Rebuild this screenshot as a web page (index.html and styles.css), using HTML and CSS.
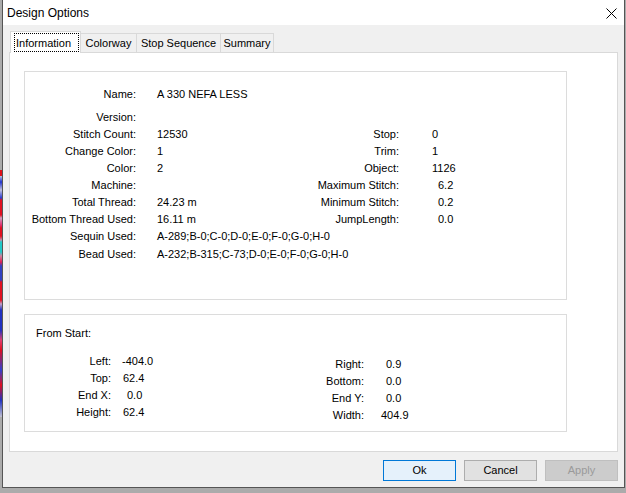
FILE: index.html
```html
<!DOCTYPE html>
<html>
<head>
<meta charset="utf-8">
<title>Design Options</title>
<link rel="stylesheet" href="styles.css">
</head>
<body>
<div class="bgstrip"></div>
<div class="window">
  <div class="titlebar">
    <span class="title">Design Options</span>
    <svg class="close" width="11" height="11" viewBox="0 0 11 11"><path d="M0.5 0.5L10.5 10.5M10.5 0.5L0.5 10.5" stroke="#000" stroke-width="1" fill="none"/></svg>
  </div>
  <div class="client">
    <div class="tabs">
      <div class="tab active t-info"><span class="focus">Information</span></div>
      <div class="tab t-color">Colorway</div>
      <div class="tab t-stop">Stop Sequence</div>
      <div class="tab t-sum">Summary</div>
    </div>
    <div class="page">
      <div class="group g1">
        <div class="info-grid">
          <div class="lbl">Name:</div><div class="val">A 330 NEFA LESS</div><div></div><div></div>
          <div class="lbl">Version:</div><div class="val"></div><div></div><div></div>
          <div class="lbl">Stitch Count:</div><div class="val">12530</div><div class="rlbl">Stop:</div><div class="rval">0</div>
          <div class="lbl">Change Color:</div><div class="val">1</div><div class="rlbl">Trim:</div><div class="rval">1</div>
          <div class="lbl">Color:</div><div class="val">2</div><div class="rlbl">Object:</div><div class="rval">1126</div>
          <div class="lbl">Machine:</div><div class="val"></div><div class="rlbl">Maximum Stitch:</div><div class="rval off">6.2</div>
          <div class="lbl">Total Thread:</div><div class="val">24.23 m</div><div class="rlbl">Minimum Stitch:</div><div class="rval off">0.2</div>
          <div class="lbl">Bottom Thread Used:</div><div class="val">16.11 m</div><div class="rlbl">JumpLength:</div><div class="rval off">0.0</div>
          <div class="lbl">Sequin Used:</div><div class="val wide">A-289;B-0;C-0;D-0;E-0;F-0;G-0;H-0</div>
          <div class="lbl">Bead Used:</div><div class="val wide">A-232;B-315;C-73;D-0;E-0;F-0;G-0;H-0</div>
        </div>
      </div>
      <div class="group g2">
        <div class="from">From Start:</div>
        <div class="extent">
          <div class="ext-left">
            <div class="elbl">Left:</div><div class="eval p11">-404.0</div>
            <div class="elbl">Top:</div><div class="eval p12">62.4</div>
            <div class="elbl">End X:</div><div class="eval p16">0.0</div>
            <div class="elbl">Height:</div><div class="eval p12">62.4</div>
          </div>
          <div class="ext-right">
            <div class="elbl">Right:</div><div class="eval p22">0.9</div>
            <div class="elbl">Bottom:</div><div class="eval p22">0.0</div>
            <div class="elbl">End Y:</div><div class="eval p22">0.0</div>
            <div class="elbl">Width:</div><div class="eval p17">404.9</div>
          </div>
        </div>
      </div>
    </div>
    <div class="buttons">
      <div class="btn default">Ok</div>
      <div class="btn">Cancel</div>
      <div class="btn disabled">Apply</div>
    </div>
  </div>
</div>
</body>
</html>
```

FILE: styles.css
```css
* { box-sizing: border-box; }
html, body { margin: 0; padding: 0; }
body {
  width: 626px;
  height: 493px;
  overflow: hidden;
  display: flex;
  align-items: flex-start;
  background: #ababab;
  font-family: "Liberation Sans", Arial, sans-serif;
  font-size: 11px;
  color: #000;
}
.bgstrip {
  flex: none;
  width: 2px;
  height: 247px;
  margin-top: 170px;
  background: linear-gradient(to bottom,
    #e0101a 0, #e0101a 6px, #b8c0e0 6px, #2233cc 12px, #c0c0e0 20px, #2a3ad0 28px,
    #e01020 30px, #e01020 45px, #d0a0c0 48px, #e03070 55px, #e01020 58px, #e01020 66px,
    #c090b0 70px, #20c8c8 72px, #20c8c8 82px, #d080a0 86px, #e02050 92px,
    #3040c0 96px, #3040c0 110px, #e01020 112px, #e01020 130px, #c0a0c8 134px,
    #2030c0 140px, #2030c0 160px, #e04070 170px, #e01020 180px, #3040d0 200px,
    #e01020 215px, #2030c0 230px, #c0c0d0 247px);
}
.window {
  flex: none;
  width: 623px;
  height: 488px;
  background: #f0f0f0;
  border-left: 1px solid #555;
  border-right: 1px solid #555;
  border-bottom: 1px solid #555;
  display: flex;
  flex-direction: column;
}
.titlebar {
  height: 25px;
  background: #fff;
  display: flex;
  align-items: center;
  justify-content: space-between;
  padding: 0 7px 0 4px;
}
.title {
  font-size: 12px;
  line-height: 16px;
  padding-top: 1px;
}
.close { display: block; margin-top: 1px; }
.client {
  padding: 6px 6px 0 6px;
}
.tabs {
  height: 21px;
  display: flex;
  align-items: flex-end;
  position: relative;
  z-index: 2;
}
.tab {
  height: 19px;
  border: 1px solid #d9d9d9;
  border-bottom: none;
  background: #f0f0f0;
  display: flex;
  align-items: center;
  justify-content: center;
  padding-top: 1px;
  margin-left: -1px;
  line-height: 13px;
}
.tab.active {
  height: 22px;
  margin-bottom: -1px;
  margin-left: 1px;
  background: #fff;
  justify-content: flex-start;
  align-items: stretch;
  padding: 1px 1px 1px 3px;
}
.focus {
  flex: 1;
  border: 1px dotted #000;
  display: flex;
  align-items: center;
  padding-left: 1px;
  padding-top: 1px;
}
.t-info { width: 71px; }
.t-color { width: 57px; }
.t-stop { width: 85px; }
.t-sum { width: 54px; }
.page {
  height: 400px;
  background: #fff;
  border: 1px solid #d9d9d9;
  padding: 18px 0 0 14px;
}
.group {
  width: 543px;
  border: 1px solid #dcdcdc;
  background: #fff;
}
.g1 { height: 229px; }
.g2 { height: 118px; margin-top: 14px; padding: 10px 0 0 0; }
.info-grid {
  display: grid;
  grid-template-columns: 111px 154px 109px 1fr;
  grid-template-rows: 23px 17px 17px 17px 17px 17px 17px 17px 18px 17px;
  padding-top: 14px;
  line-height: 17px;
  white-space: nowrap;
}
.lbl, .rlbl { text-align: right; }
.val { padding-left: 21px; }
.val.wide { grid-column: span 3; }
.rval { padding-left: 33px; }
.rval.off { padding-left: 39px; }
.from {
  line-height: 17px;
  padding-left: 11px;
}
.extent {
  display: flex;
  align-items: flex-start;
}
.ext-left, .ext-right {
  display: grid;
  grid-auto-rows: 17px;
  line-height: 17px;
  white-space: nowrap;
}
.ext-left {
  width: 265px;
  grid-template-columns: 86px 1fr;
  margin-top: 11px;
}
.ext-right {
  grid-template-columns: 74px 1fr;
  margin-top: 14px;
}
.elbl { text-align: right; }
.p11 { padding-left: 11px; }
.p12 { padding-left: 12px; }
.p16 { padding-left: 16px; }
.p17 { padding-left: 17px; }
.p22 { padding-left: 22px; }
.buttons {
  display: flex;
  justify-content: flex-end;
  gap: 8px;
  margin-top: 8px;
}
.btn {
  width: 73px;
  height: 21px;
  border: 1px solid #adadad;
  background: #e1e1e1;
  display: flex;
  align-items: center;
  justify-content: center;
  line-height: 13px;
}
.btn.default {
  border-color: #0078d7;
  background: #e5f1fb;
}
.btn.disabled {
  border-color: #bfbfbf;
  background: #cccccc;
  color: #9a9a9a;
}
```
